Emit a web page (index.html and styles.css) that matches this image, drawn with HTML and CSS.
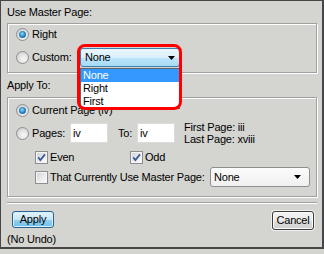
FILE: index.html
```html
<!DOCTYPE html>
<html lang="en">
<head>
    <meta charset="UTF-8">
    <title>Master Page</title>
    <link rel="stylesheet" href="styles.css">
</head>
<body>
<div class="window">
    <div class="caption caption-top">Use Master Page:</div>
    <div class="group group-master">
        <div class="row row-right">
            <span class="radio on"></span>
            <span>Right</span>
        </div>
        <div class="row row-custom">
            <span class="radio"></span>
            <span class="label-custom">Custom:</span>
            <div class="combo-wrap">
                <div class="combo combo-hot">
                    <span>None</span>
                    <svg class="arrow" width="7" height="4" viewBox="0 0 7 4"><path d="M0 0H7L3.5 4Z"/></svg>
                </div>
                <ul class="droplist">
                    <li class="selected">None</li>
                    <li>Right</li>
                    <li>First</li>
                </ul>
                <div class="callout"></div>
            </div>
        </div>
    </div>

    <div class="caption caption-apply">Apply To:</div>
    <div class="group group-apply">
        <div class="row row-current">
            <span class="radio on"></span>
            <span>Current Page (iv)</span>
        </div>
        <div class="row row-pages">
            <span class="radio"></span>
            <span class="label-pages">Pages:</span>
            <span class="textbox">iv</span>
            <span class="label-to">To:</span>
            <span class="textbox">iv</span>
            <div class="page-info">
                <div>First Page: iii</div>
                <div>Last Page: xviii</div>
            </div>
        </div>
        <div class="row row-checks">
            <div class="check-item check-even">
                <span class="check"><svg width="11" height="11" viewBox="0 0 11 11"><path d="M2.2 5.4L4.4 8L9 2.4" fill="none" stroke="#3d5a98" stroke-width="1.8"/></svg></span>
                <span>Even</span>
            </div>
            <div class="check-item">
                <span class="check"><svg width="11" height="11" viewBox="0 0 11 11"><path d="M2.2 5.4L4.4 8L9 2.4" fill="none" stroke="#3d5a98" stroke-width="1.8"/></svg></span>
                <span>Odd</span>
            </div>
        </div>
        <div class="row row-using">
            <div class="check-item check-using">
                <span class="check"></span>
                <span>That Currently Use Master Page:</span>
            </div>
            <div class="combo combo-normal">
                <span>None</span>
                <svg class="arrow" width="7" height="4" viewBox="0 0 7 4"><path d="M0 0H7L3.5 4Z"/></svg>
            </div>
        </div>
    </div>

    <div class="separator"></div>

    <div class="footer">
        <div class="footer-left">
            <button class="btn btn-default">Apply</button>
            <div class="note">(No Undo)</div>
        </div>
        <button class="btn btn-cancel">Cancel</button>
    </div>
</div>
</body>
</html>
```

FILE: styles.css
```css
body {
    margin: 0;
    background: #d4d4d0;
    font-family: "Liberation Sans", Arial, sans-serif;
    font-size: 11px;
    letter-spacing: -0.2px;
    line-height: 13px;
    color: #000;
}
.window {
    box-sizing: border-box;
    width: 324px;
    height: 249px;
    border: 1px solid #474747;
    border-right-width: 2px;
    border-bottom-width: 2px;
    padding: 0 5px 0 6px;
}
.caption-top {
    margin-top: 5px;
}
.caption-apply {
    margin-top: 6px;
}
.group {
    border: 1px solid #a0a0a0;
    box-shadow: inset 1px 1px 0 #fff, 1px 1px 0 #fff;
    padding-left: 8px;
}
.group-master {
    margin-top: 4px;
    height: 47px;
    padding-top: 1px;
}
.group-apply {
    margin-top: 5px;
    height: 95px;
    padding-top: 3px;
}
.row {
    display: flex;
    align-items: center;
}
.row-right {
    height: 18px;
    gap: 3px;
}
.row-custom {
    height: 19px;
    margin-top: 5px;
    gap: 3px;
}
.label-custom {
    width: 45px;
}
.row-current {
    height: 18px;
    gap: 3px;
}
.row-pages {
    height: 20px;
    margin-top: 4px;
}
.row-pages .radio {
    margin-right: 3px;
}
.label-pages {
    width: 38px;
}
.label-to {
    width: 19px;
    margin-left: 10px;
}
.page-info {
    margin-left: 9px;
    line-height: 12.5px;
}
.row-checks {
    height: 16px;
    margin-top: 6px;
    padding-left: 19px;
}
.row-using {
    height: 20px;
    margin-top: 2px;
    padding-left: 19px;
}
.check-item {
    display: flex;
    align-items: center;
    gap: 2px;
}
.check-even {
    width: 95px;
}
.check-using {
    width: 175px;
}

/* radio buttons and check boxes */
.radio {
    flex: none;
    position: relative;
    box-sizing: border-box;
    width: 13px;
    height: 13px;
    border-radius: 50%;
    border: 1px solid #8c8e90;
    background: radial-gradient(circle at 60% 65%, #f8f8f8 0, #e4e4e4 45%, #c4c4c4 100%);
}
.radio.on::after {
    content: "";
    position: absolute;
    left: 2px;
    top: 2px;
    width: 7px;
    height: 7px;
    border-radius: 50%;
    background: radial-gradient(circle at 45% 40%, #9fdcf8 0, #2b8ccc 45%, #124f84 100%);
}
.check {
    flex: none;
    display: flex;
    box-sizing: border-box;
    width: 13px;
    height: 13px;
    border: 1px solid #8c8e90;
    background: linear-gradient(135deg, #cfd1d4 0, #f6f6f6 80%);
    box-shadow: inset 0 0 0 1px #f4f4f4;
}

/* combo boxes */
.combo {
    box-sizing: border-box;
    width: 100px;
    display: flex;
    align-items: center;
    justify-content: space-between;
    border-radius: 3px;
}
.combo-wrap {
    position: relative;
    z-index: 2;
}
.combo-hot {
    height: 19px;
    padding: 0 4px 0 4px;
    border: 1px solid #3c7fb1;
    background: linear-gradient(#eaf6fd 0, #d9f0fc 50%, #bee6fd 50%, #a7d9f5 100%);
}
.combo-normal {
    height: 20px;
    padding: 0 8px 0 3px;
    border: 1px solid #8e8f8f;
    background: linear-gradient(#fcfcfc, #f0f0f0);
}
.droplist {
    position: absolute;
    left: 0;
    top: 20px;
    width: 100px;
    margin: 0;
    padding: 0;
    list-style: none;
    background: #fff;
    border: 1px solid #646464;
    box-sizing: border-box;
}
.droplist li {
    height: 13px;
    padding-left: 2px;
}
.droplist .selected {
    background: #3399ff;
    color: #fff;
}
.callout {
    position: absolute;
    left: -3px;
    top: -4px;
    width: 105px;
    height: 66px;
    box-sizing: border-box;
    border: 3px solid #f00;
    border-radius: 8px;
}

.textbox {
    box-sizing: border-box;
    width: 38px;
    height: 20px;
    padding: 3px 0 0 2px;
    background: #fff;
    border: 1px solid #dcdcdc;
}

.separator {
    margin-top: 5px;
    border-top: 1px solid #a0a0a0;
    border-bottom: 1px solid #fff;
}

.footer {
    display: flex;
    justify-content: space-between;
    margin-top: 7px;
    padding: 0 3px 0 5px;
}
.note {
    margin: 5px 0 0 -5px;
}
.btn {
    box-sizing: border-box;
    width: 42px;
    padding: 0;
    font: inherit;
    letter-spacing: inherit;
    color: #000;
    border-radius: 3px;
}
.btn-default {
    height: 17px;
    border: 1px solid #2c628b;
    background: linear-gradient(#e5f4fc 0, #c4e5f6 50%, #98d1ef 50%, #6cc0ea 100%);
    box-shadow: inset 0 0 0 1px #d6f0fd;
}
.btn-cancel {
    height: 19px;
    border: 1px solid #3c3c3c;
    background: linear-gradient(#f2f2f2 0, #ebebeb 50%, #dddddd 50%, #cfcfcf 100%);
    box-shadow: inset 0 0 0 1px #fcfcfc, 0 0 0 1px #f0f0f0;
}
```
